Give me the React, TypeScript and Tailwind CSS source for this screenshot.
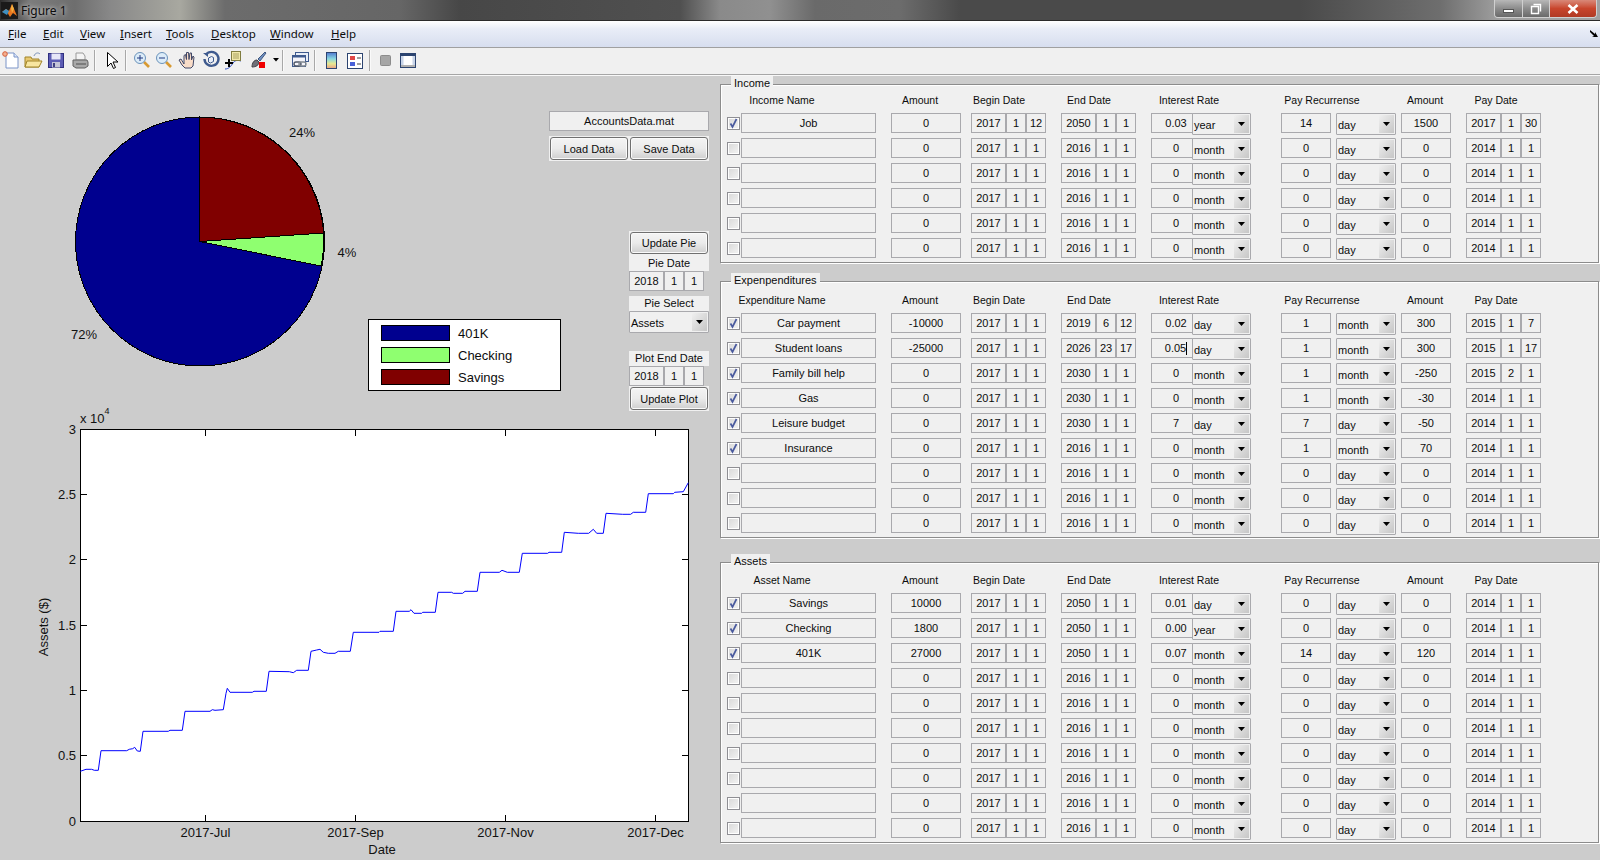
import type { ReactNode } from 'react';

type Row = {
  on?: boolean;
  name?: string;
  amount?: string;
  begin?: string[];
  end?: string[];
  rate?: string;
  rateUnit?: string;
  rec?: string;
  recUnit?: string;
  payAmount?: string;
  pay?: string[];
  caret?: boolean;
};

const INCOME: Row[] = [
  { on: true, name: 'Job', begin: ['2017', '1', '12'], end: ['2050', '1', '1'], rate: '0.03', rateUnit: 'year', rec: '14', payAmount: '1500', pay: ['2017', '1', '30'] },
  {}, {}, {}, {}, {},
];

const EXPENSES: Row[] = [
  { on: true, name: 'Car payment', amount: '-10000', end: ['2019', '6', '12'], rate: '0.02', rateUnit: 'day', rec: '1', recUnit: 'month', payAmount: '300', pay: ['2015', '1', '7'] },
  { on: true, name: 'Student loans', amount: '-25000', end: ['2026', '23', '17'], rate: '0.05', rateUnit: 'day', rec: '1', recUnit: 'month', payAmount: '300', pay: ['2015', '1', '17'], caret: true },
  { on: true, name: 'Family bill help', end: ['2030', '1', '1'], rec: '1', recUnit: 'month', payAmount: '-250', pay: ['2015', '2', '1'] },
  { on: true, name: 'Gas', end: ['2030', '1', '1'], rec: '1', recUnit: 'month', payAmount: '-30' },
  { on: true, name: 'Leisure budget', end: ['2030', '1', '1'], rate: '7', rateUnit: 'day', rec: '7', payAmount: '-50' },
  { on: true, name: 'Insurance', rec: '1', recUnit: 'month', payAmount: '70' },
  {}, {}, {},
];

const ASSETS: Row[] = [
  { on: true, name: 'Savings', amount: '10000', end: ['2050', '1', '1'], rate: '0.01', rateUnit: 'day' },
  { on: true, name: 'Checking', amount: '1800', end: ['2050', '1', '1'], rate: '0.00', rateUnit: 'year' },
  { on: true, name: '401K', amount: '27000', end: ['2050', '1', '1'], rate: '0.07', rateUnit: 'month', rec: '14', payAmount: '120' },
  {}, {}, {}, {}, {}, {}, {},
];

// traced from the plot, first part and second part were read at different x offsets
const TRACE_A = [[241,1114],[258,1108],[275,1108],[283,1111],[295,1111],[303,1052],[380,1052],[388,1048],[398,1046],[404,1042],[412,1053],[421,1054],[429,994],[505,994],[510,991],[547,991],[555,934],[630,934],[637,929],[645,931],[670,929],[678,880],[682,865],[690,877],[757,877],[762,874],[799,874],[807,814],[868,815],[880,818],[890,811],[925,811],[933,754],[950,750],[960,748],[970,757],[985,760],[1005,760],[1015,754],[1051,754],[1060,697],[1137,697],[1140,694],[1180,694],[1188,634],[1200,634]];
const TRACE_B = [[28,634],[33,629],[42,640],[65,640],[68,637],[106,637],[114,577],[155,577],[160,580],[188,580],[195,574],[232,574],[240,517],[298,517],[306,511],[322,517],[358,517],[367,460],[443,460],[447,457],[485,457],[493,397],[535,400],[566,400],[580,388],[590,400],[610,400],[618,340],[668,343],[692,343],[700,337],[737,337],[745,281],[820,281],[824,277],[850,275],[865,248]];

const tracePoints = [
  ...TRACE_A.map(([x, y]) => `${(x / 3).toFixed(1)},${(400 + y / 3).toFixed(1)}`),
  ...TRACE_B.map(([x, y]) => `${(400 + x / 3).toFixed(1)},${(400 + y / 3).toFixed(1)}`),
].join(' ');

const Box = ({ className, children }: { className: string; children?: ReactNode }) => (
  <div className={`h-5 shrink-0 border border-[#a9a9ad] bg-[#f0f0f0] flex items-center justify-center leading-none ${className}`}>
    {children}
  </div>
);

const DateBoxes = ({ parts, className = '' }: { parts: string[]; className?: string }) => (
  <div className={`flex shrink-0 ${className}`}>
    <Box className="w-[35px]">{parts[0]}</Box>
    <Box className="w-5">{parts[1]}</Box>
    <Box className="w-5">{parts[2]}</Box>
  </div>
);

const Popup = ({ value, className }: { value: string; className: string }) => (
  <div className={`h-[22px] shrink-0 relative border border-[#a9a9ad] bg-[#f0f0f0] flex items-center pl-px pt-[2px] leading-none rounded-[1px] ${className}`}>
    {value}
    <div className="absolute right-[1px] top-[1px] bottom-[1px] w-[15px] bg-gradient-to-br from-[#f0f0f0] to-[#c6c6c6] flex items-center justify-center">
      <svg width="7" height="4" viewBox="0 0 7 4"><path d="M0 0h7L3.500 4z" fill="#000" /></svg>
    </div>
  </div>
);

const Check = ({ on }: { on?: boolean }) => (
  <div className="w-[13px] h-[13px] shrink-0 border border-[#8f8f94] bg-gradient-to-br from-[#d8d8d8] to-[#f4f4f4] shadow-[inset_0_0_0_1px_#fff] flex items-center justify-center">
    {on && (
      <svg width="11" height="11" viewBox="0 0 11 11">
        <path d="M2.500 5.500l2 3.500 4-8" fill="none" stroke="#4a5a9e" strokeWidth="1.700" />
      </svg>
    )}
  </div>
);

const AccountRow = ({ row }: { row: Row }) => (
  <div className="flex h-5 items-center pl-[6px]">
    <Check on={row.on} />
    <Box className="w-[135px] ml-px">{row.name}</Box>
    <Box className="w-[70px] ml-[15px]">{row.amount ?? '0'}</Box>
    <DateBoxes parts={row.begin ?? ['2017', '1', '1']} className="ml-[10px]" />
    <DateBoxes parts={row.end ?? ['2016', '1', '1']} className="ml-[15px]" />
    <Box className="w-[50px] ml-[15px]">
      {row.rate ?? '0'}
      {row.caret && <span className="w-px h-[13px] bg-black" />}
    </Box>
    <div className="h-5 self-start -ml-[9px]">
      <Popup value={row.rateUnit ?? 'month'} className="w-[59px]" />
    </div>
    <Box className="w-[50px] ml-[30px]">{row.rec ?? '0'}</Box>
    <div className="h-5 self-start ml-[5px]">
      <Popup value={row.recUnit ?? 'day'} className="w-[60px]" />
    </div>
    <Box className="w-[50px] ml-[5px]">{row.payAmount ?? '0'}</Box>
    <DateBoxes parts={row.pay ?? ['2014', '1', '1']} className="ml-[15px]" />
  </div>
);

const Panel = ({ title, nameLabel, rows, className }: { title: string; nameLabel: string; rows: Row[]; className: string }) => (
  <section className={`relative w-[879px] border border-[#8c8c8c] bg-[#f0f0f0] shadow-[inset_1px_1px_0_#fff,1px_1px_0_#fff] ${className}`}>
    <div className="absolute left-[10px] -top-[9px] h-[15px] px-[3px] bg-[#f0f0f0] flex items-center leading-none">{title}</div>
    <div className="flex h-[14px] items-center text-center leading-none text-[10.5px]">
      <span className="w-[122px]">{nameLabel}</span>
      <span className="w-[80px] ml-[37px]">Amount</span>
      <span className="w-[78px]">Begin Date</span>
      <span className="w-[80px] ml-[11px]">End Date</span>
      <span className="w-[100px] ml-[10px]">Interest Rate</span>
      <span className="w-[104px] ml-[31px]">Pay Recurrense</span>
      <span className="w-[70px] ml-[16px]">Amount</span>
      <span className="w-[70px] ml-px">Pay Date</span>
    </div>
    <div className="flex flex-col gap-[5px] mt-[6px]">
      {rows.map((row, i) => <AccountRow key={i} row={row} />)}
    </div>
  </section>
);

const MatButton = ({ label, className }: { label: string; className: string }) => (
  <button className={`rounded-[3px] border border-[#707070] bg-gradient-to-b from-[#f4f4f4] via-[#ebebeb] to-[#cfcfcf] shadow-[inset_0_0_0_1px_#fafafa] leading-none pt-px ${className}`}>
    {label}
  </button>
);

const Icon = ({ className, children }: { className: string; children: ReactNode }) => (
  <svg className={`shrink-0 ${className}`} width="20" height="20" viewBox="0 0 20 20">{children}</svg>
);

const Sep = ({ className }: { className: string }) => <div className={`w-[2px] h-[21px] shrink-0 bg-[#a8a8a8] border-r border-[#fafafa] ${className}`} />;

const Toolbar = () => (
  <div className="h-[27px] bg-[#f0f0f0] border-b border-[#a6a6a6] flex items-center pb-[2px]">
    <Icon className="ml-px">
      <path d="M5 3h8l4 4v11H5z" fill="#fff" stroke="#7a94c8" />
      <path d="M13 3v4h4" fill="#dbe6f8" stroke="#7a94c8" />
      <circle cx="4" cy="4" r="2.300" fill="#f2b090" stroke="#d8603a" />
    </Icon>
    <Icon className="ml-[2px]">
      <path d="M2 7h6l1 2h7v8H2z" fill="#e8c870" stroke="#a08428" />
      <path d="M2 17l2-6h15l-3 6z" fill="#f8e6a0" stroke="#a08428" />
      <path d="M11 6c1-3 4-4 6-2" fill="none" stroke="#7890b8" />
    </Icon>
    <Icon className="ml-[3px]">
      <rect x="2.500" y="3.500" width="15" height="14" fill="#5c5cb4" stroke="#303080" />
      <rect x="5.500" y="3.500" width="9" height="6" fill="#e6e6f8" />
      <rect x="6" y="12" width="8" height="5.500" fill="#c4c4d8" />
      <rect x="7" y="13" width="2" height="4" fill="#404080" />
    </Icon>
    <Icon className="ml-[4px]">
      <path d="M6 3h7l2 3v4H6z" fill="#f4f4f4" stroke="#9a9a9a" />
      <path d="M3 10h14l1 2v4l-3 2H6l-3-2z" fill="#a8a8a8" stroke="#606060" />
      <path d="M6 14h10" stroke="#505050" />
    </Icon>
    <Sep className="ml-[4px]" />
    <Icon className="ml-[6px]">
      <path d="M5.500 2.500v14l3.500-3.500 2.500 5.500 2-1-2.500-5.500h5z" fill="#fff" stroke="#000" />
    </Icon>
    <Sep className="ml-[3px]" />
    <Icon className="ml-[5px]">
      <path d="M12 12l5 5" stroke="#d89a32" strokeWidth="2.600" />
      <circle cx="8" cy="8" r="5.500" fill="#dcecf8" stroke="#6a92ba" />
      <path d="M5 8h6M8 5v6" stroke="#203880" />
    </Icon>
    <Icon className="ml-[2px]">
      <path d="M12 12l5 5" stroke="#d89a32" strokeWidth="2.600" />
      <circle cx="8" cy="8" r="5.500" fill="#dcecf8" stroke="#6a92ba" />
      <path d="M5 8h6" stroke="#203880" />
    </Icon>
    <Icon className="ml-[4px]">
      <path d="M3 9l3 5V5.500l1.500-1 1 5V2.500h2l.5 7 1-6.500h1.500v7l1.500-4 1 1-1 9-2 2H7l-3-3-3-5z" fill="#f8dcc8" stroke="#404868" strokeLinejoin="round" />
    </Icon>
    <Icon className="ml-[3px]">
      <path d="M5 4.500A7 7 0 1 1 3.500 9" fill="none" stroke="#3e5a8e" strokeWidth="2.400" />
      <path d="M2 3h5v4z" fill="#3e5a8e" />
      <path d="M7.500 8l3-1.500 2 1v4l-3 1.500-2-1z" fill="#e8eef8" stroke="#3e5a8e" />
    </Icon>
    <Icon className="ml-[2px]">
      <path d="M2 19c4 0 6-3 8-6s5-3 8-2" fill="none" stroke="#2848c0" />
      <rect x="8.500" y="1.500" width="9" height="9" fill="#f0e8a8" stroke="#807c40" />
      <path d="M10 4h6M10 6h6M10 8h6" stroke="#a8a060" />
      <path d="M6 9v8M2 13h8" stroke="#000" strokeWidth="2" />
    </Icon>
    <Icon className="ml-[5px]">
      <path d="M17 2l-7 7 2 2 6-8z" fill="#7090c0" stroke="#405880" />
      <path d="M4 17c0-4 2-7 5-7l2 2c0 3-3 5-7 5z" fill="#707078" stroke="#404048" />
      <rect x="11" y="12" width="6" height="6" fill="#f00000" />
    </Icon>
    <svg className="ml-[5px] shrink-0" width="6" height="4" viewBox="0 0 6 4"><path d="M0 0h6L3 3.500z" fill="#000" /></svg>
    <Sep className="ml-[3px]" />
    <Icon className="ml-[6px]">
      <rect x="5.500" y="2.500" width="13" height="9" fill="#e8eef8" stroke="#3e5a8e" />
      <rect x="2.500" y="5.500" width="13" height="11" fill="#f4f4fa" stroke="#3e5a8e" />
      <rect x="2.500" y="5.500" width="13" height="2" fill="#3e5a8e" />
      <rect x="4" y="12" width="7" height="4" rx="2" fill="none" stroke="#505868" strokeWidth="1.400" />
      <rect x="9" y="12" width="7" height="4" rx="2" fill="none" stroke="#808890" strokeWidth="1.400" />
    </Icon>
    <Sep className="ml-[4px]" />
    <Icon className="ml-[6px]">
      <defs>
        <linearGradient id="colorbar-grad" x1="0" y1="0" x2="0" y2="1">
          <stop offset="0" stopColor="#5078d0" />
          <stop offset="0.4" stopColor="#88d8e0" />
          <stop offset="0.7" stopColor="#e8e890" />
          <stop offset="1" stopColor="#e8a088" />
        </linearGradient>
      </defs>
      <rect x="4.500" y="2.500" width="10" height="16" fill="url(#colorbar-grad)" stroke="#2c4470" />
    </Icon>
    <Icon className="ml-[3px]">
      <rect x="2.500" y="3.500" width="15" height="15" fill="#fff" stroke="#2c4470" />
      <rect x="5" y="6" width="5" height="4" fill="#e04848" />
      <rect x="5" y="12" width="5" height="4" fill="#4860d8" />
      <path d="M12 8h4M12 14h4" stroke="#404040" />
    </Icon>
    <Sep className="ml-[4px]" />
    <Icon className="ml-[5px]">
      <rect x="4.500" y="5.500" width="10" height="10" rx="1" fill="#a6a6a6" stroke="#8c8c8c" />
    </Icon>
    <Icon className="ml-[2px]">
      <rect x="2.500" y="3.500" width="15" height="14" fill="#fff" stroke="#2c4470" />
      <rect x="2.500" y="3.500" width="15" height="2.500" fill="#2c4470" />
      <rect x="3" y="6" width="2.500" height="11" fill="#c8d4e8" />
      <rect x="14.500" y="6" width="2.500" height="11" fill="#c8d4e8" />
      <rect x="3" y="15" width="14" height="2" fill="#b0b0b0" />
    </Icon>
  </div>
);

const MENU: [string, string, string][] = [
  ['F', 'ile', 'w-[35px]'],
  ['E', 'dit', 'w-[37px]'],
  ['V', 'iew', 'w-[40px]'],
  ['I', 'nsert', 'w-[46px]'],
  ['T', 'ools', 'w-[45px]'],
  ['D', 'esktop', 'w-[59px]'],
  ['W', 'indow', 'w-[61px]'],
  ['H', 'elp', 'w-[30px]'],
];

const PieChart = () => (
  <svg className="shrink-0" width="368" height="335" viewBox="0 76 368 335">
    <g stroke="#000" strokeWidth="1" shapeRendering="crispEdges">
      <circle cx="200" cy="241.500" r="124.500" fill="#00008f" />
      <path d="M199.500 241.500V117A124.500 124.500 0 0 1 323.700 233z" fill="#800000" />
      <path d="M199.500 241.500L323.700 233A124.500 124.500 0 0 1 321 266z" fill="#8fff70" />
    </g>
    <g fontSize="13" fill="#111" textAnchor="middle" dominantBaseline="central">
      <text x="302" y="132">24%</text>
      <text x="347" y="252">4%</text>
      <text x="84" y="334">72%</text>
    </g>
  </svg>
);

const XTICKS: [number, string][] = [[205.500, '2017-Jul'], [355.500, '2017-Sep'], [505.500, '2017-Nov'], [655.500, '2017-Dec']];
const YTICKS: [number, string][] = [[429.500, '3'], [494.500, '2.5'], [559.500, '2'], [625.500, '1.5'], [690.500, '1'], [755.500, '0.5'], [821.500, '0']];

const AssetPlot = () => (
  <svg className="shrink-0 overflow-visible" width="716" height="449" viewBox="0 411 716 449">
    <rect x="80.500" y="429.500" width="608" height="392" fill="#fff" stroke="#000" shapeRendering="crispEdges" />
    <g stroke="#000" shapeRendering="crispEdges">
      {XTICKS.map(([x]) => <path key={x} d={`M${x} 430v6M${x} 821v-6`} />)}
      {YTICKS.map(([y]) => <path key={y} d={`M81 ${y}h6M688 ${y}h-6`} />)}
    </g>
    <polyline points={tracePoints} fill="none" stroke="#0000ff" strokeWidth="1" />
    <g fontSize="13" fill="#111" dominantBaseline="central">
      {XTICKS.map(([x, label]) => <text key={label} x={x} y="832" textAnchor="middle">{label}</text>)}
      {YTICKS.map(([y, label]) => <text key={label} x="76" y={y} textAnchor="end">{label}</text>)}
      <text x="382" y="849" textAnchor="middle">Date</text>
      <text x="43" y="627" textAnchor="middle" transform="rotate(-90 43 627)">Assets ($)</text>
      <text x="80" y="418">x 10</text>
      <text x="104.500" y="411" fontSize="9">4</text>
    </g>
  </svg>
);

const LEGEND: [string, string][] = [['401K', 'bg-[#00008f]'], ['Checking', 'bg-[#8fff70]'], ['Savings', 'bg-[#800000]']];

const App = () => (
  <div className="w-[1600px] h-[860px] overflow-hidden bg-[#cccccc] text-[11px] text-[#0c0c0c] font-['Liberation_Sans',Arial,sans-serif]">
    <header className="h-[21px] flex justify-between border-b border-[#2a2a2a] bg-[linear-gradient(90deg,#2c2c2c_0px,#7c7c7c_30px,#6e6e6e_75px,#888_110px,#a8a8a0_180px,#6c6c6c_225px,#666_400px,#474747_460px,#505050_680px,#8a8a8a_720px,#909090_770px,#6a6a6a_815px,#6c6c6c_900px,#4a4a4a_960px,#4a4a4a_1300px,#6e6e6e_1440px,#a0a0a0_1500px)]">
      <div className="flex items-center">
        <svg className="ml-px" width="17" height="17" viewBox="0 0 17 17">
          <rect width="17" height="17" fill="#1a1a1a" />
          <path d="M1 10l4-3 3 2 3-7 5 12-4-3-3 4-3-5z" fill="#e8761e" />
          <path d="M1 10l4-3 3 2-2 4z" fill="#3f8fc0" />
          <path d="M11 2l2 5-2 4-1-5z" fill="#f2b040" />
        </svg>
        <span className="ml-[3px] mt-[2px] text-[12px] leading-none font-['Noto_Sans',sans-serif] [text-shadow:0_0_5px_#fff]">Figure 1</span>
      </div>
      <div className="flex h-[18px] w-[103px] mr-[3px] rounded-b-[4px] border border-t-0 border-[#d0d0d0] overflow-hidden">
        <div className="w-[28px] flex items-center justify-center border-r border-[#d0d0d0] bg-gradient-to-b from-[#b8b8b8] via-[#8c8c8c] to-[#6a6a6a]">
          <div className="w-[11px] h-[4px] bg-white border border-[#555] mt-1" />
        </div>
        <div className="w-[27px] flex items-center justify-center border-r border-[#d0d0d0] bg-gradient-to-b from-[#b8b8b8] via-[#8c8c8c] to-[#6a6a6a]">
          <svg width="12" height="12" viewBox="0 0 12 12">
            <path d="M3.500 1.500h7v7M1.500 3.500h7v7h-7z" fill="none" stroke="#fff" strokeWidth="1.400" />
          </svg>
        </div>
        <div className="flex-1 flex items-center justify-center bg-gradient-to-b from-[#d88878] via-[#c8452c] to-[#b03a24]">
          <svg width="12" height="10" viewBox="0 0 12 10">
            <path d="M1.500 1l9 8M10.500 1l-9 8" stroke="#fff" strokeWidth="2.600" />
          </svg>
        </div>
      </div>
    </header>

    <nav className="h-[27px] pl-2 border-b border-[#a0a0a0] bg-gradient-to-b from-[#ffffff] via-[#e9edf7] via-30% to-[#d7deef] flex items-center text-[11.5px] leading-none font-['Noto_Sans',sans-serif]">
      {MENU.map(([key, rest, width]) => (
        <span key={key} className={width}><span className="underline">{key}</span>{rest}</span>
      ))}
      <svg className="ml-auto mr-[2px] mb-[2px]" width="8" height="7" viewBox="0 0 8 7">
        <path d="M0 0l5 4V2l3 5H2l2-1L0 2z" fill="#000" />
      </svg>
    </nav>

    <Toolbar />

    <main className="flex h-[785px] border-t border-[#f8f8f8]">
      <div className="w-[716px] shrink-0 flex flex-col">
        <div className="flex h-[335px]">
          <PieChart />
          <div className="flex flex-col">
            <div className="ml-[181px] mt-[35px] w-[160px]">
              <div className="h-5 border border-[#a9a9ad] bg-[#f0f0f0] flex items-center justify-center leading-none">AccountsData.mat</div>
              <div className="h-[25px] mt-[5px] bg-[#f0f0f0] flex gap-[2px] p-px">
                <MatButton label="Load Data" className="w-[78px]" />
                <MatButton label="Save Data" className="w-[78px]" />
              </div>
            </div>
            <div className="flex mt-[70px]">
              <div className="w-[193px] h-[72px] mt-[88px] border border-black bg-white flex flex-col gap-[6px] pt-[5px] pl-3 text-[13px] leading-none">
                {LEGEND.map(([label, swatch]) => (
                  <div key={label} className="flex items-center gap-2">
                    <div className={`w-[69px] h-4 border border-black ${swatch}`} />
                    {label}
                  </div>
                ))}
              </div>
              <div className="w-20 ml-[68px] flex flex-col">
                <div className="h-6 bg-[#f0f0f0] flex p-px">
                  <MatButton label="Update Pie" className="flex-1" />
                </div>
                <div className="h-4 bg-[#f0f0f0] flex items-center justify-center leading-none">Pie Date</div>
                <DateBoxes parts={['2018', '1', '1']} />
                <div className="h-[15px] mt-[5px] bg-[#f0f0f0] flex items-center justify-center leading-none">Pie Select</div>
                <Popup value="Assets" className="w-20" />
                <div className="h-[15px] mt-[18px] bg-[#f0f0f0] flex items-center justify-center leading-none">Plot End Date</div>
                <DateBoxes parts={['2018', '1', '1']} />
                <div className="h-[25px] bg-[#f0f0f0] flex p-px">
                  <MatButton label="Update Plot" className="flex-1" />
                </div>
              </div>
            </div>
          </div>
        </div>
        <AssetPlot />
      </div>
      <div className="ml-1 flex flex-col">
        <Panel title="Income" nameLabel="Income Name" rows={INCOME} className="mt-2 pt-2 pb-1" />
        <Panel title="Expenpenditures" nameLabel="Expenditure Name" rows={EXPENSES} className="mt-[18px] pt-[11px] pb-1" />
        <Panel title="Assets" nameLabel="Asset Name" rows={ASSETS} className="mt-[24px] pt-[10px] pb-1" />
      </div>
    </main>
  </div>
);

export default App;
